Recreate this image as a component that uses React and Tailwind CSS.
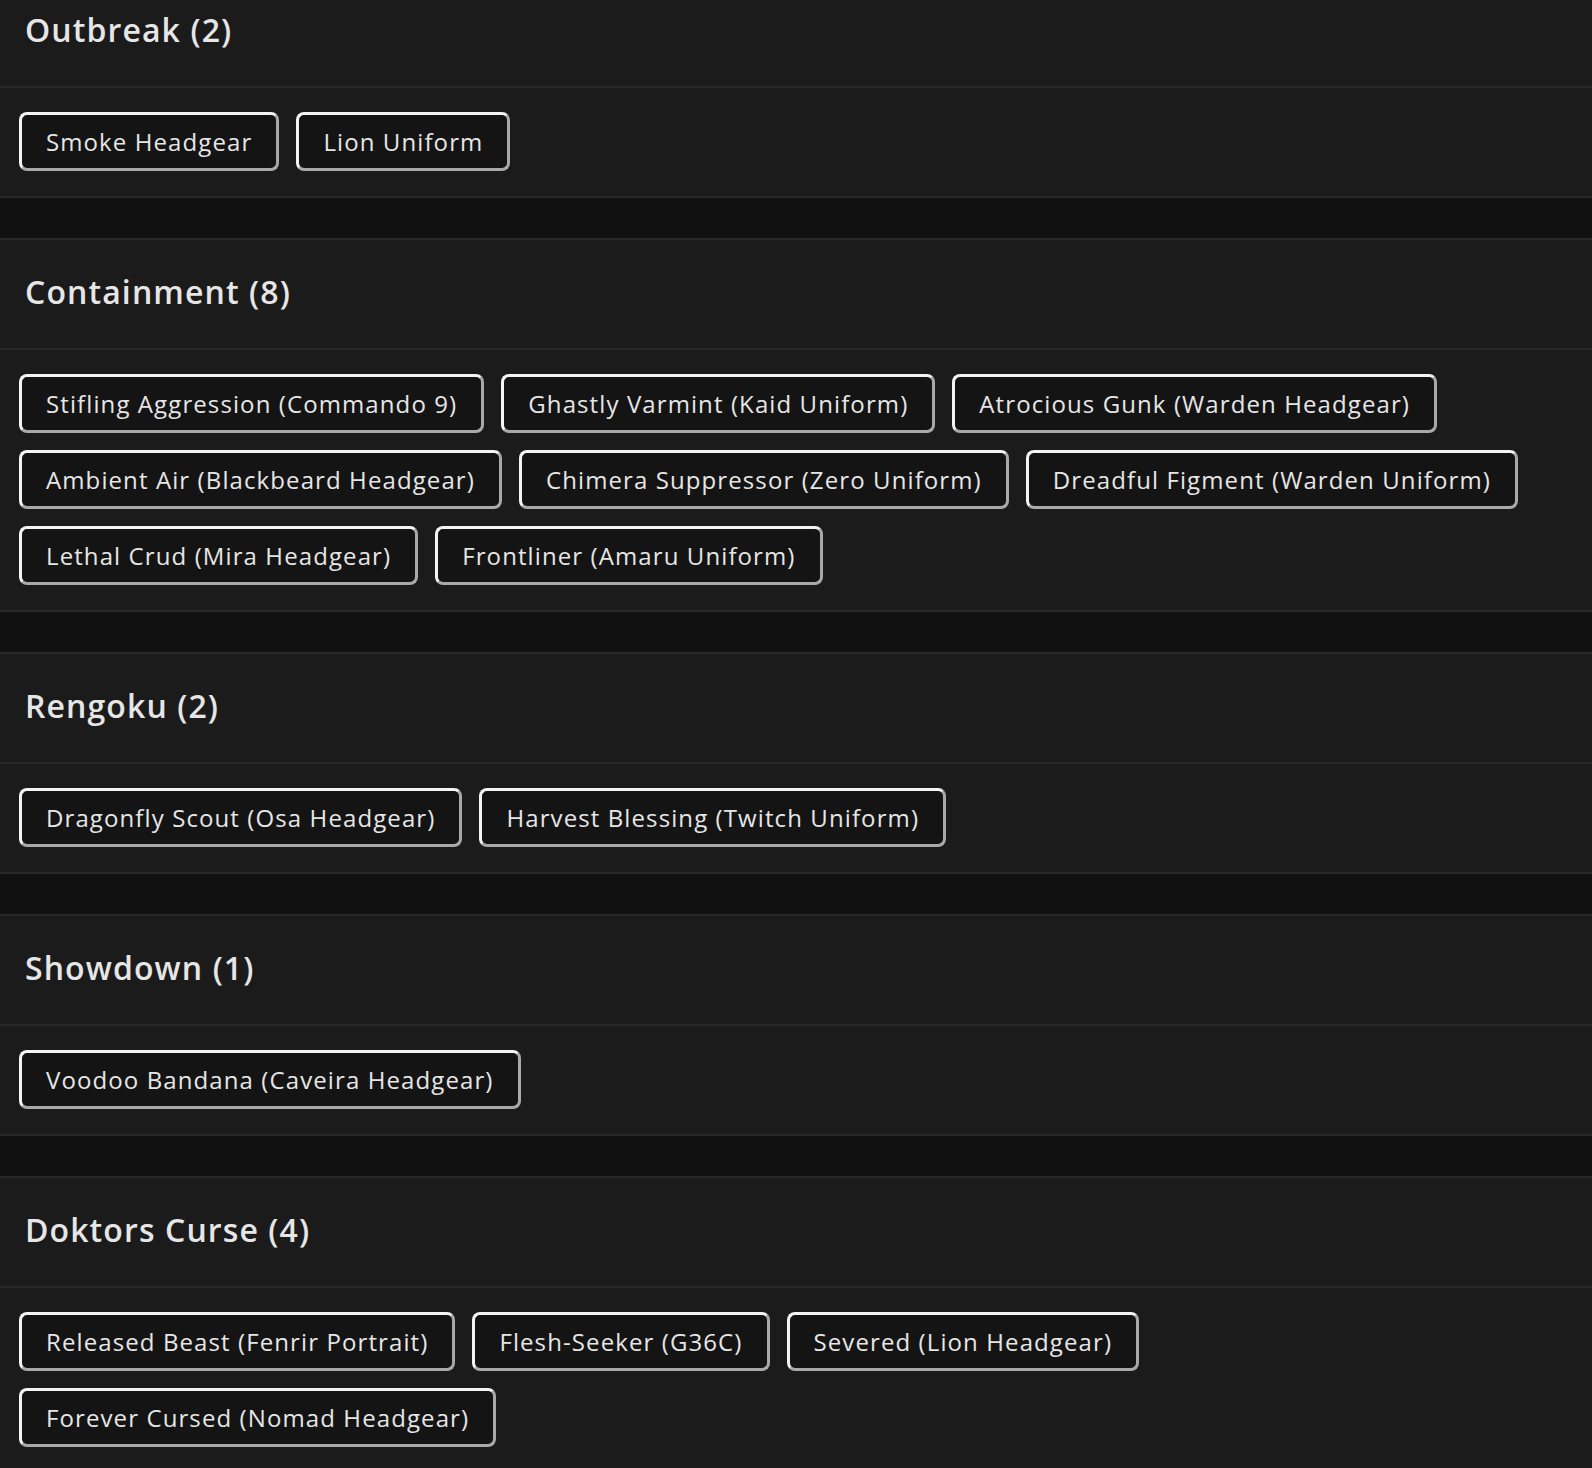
const sections = [
  { title: "Outbreak (2)", items: ["Smoke Headgear", "Lion Uniform"] },
  {
    title: "Containment (8)",
    items: [
      "Stifling Aggression (Commando 9)",
      "Ghastly Varmint (Kaid Uniform)",
      "Atrocious Gunk (Warden Headgear)",
      "Ambient Air (Blackbeard Headgear)",
      "Chimera Suppressor (Zero Uniform)",
      "Dreadful Figment (Warden Uniform)",
      "Lethal Crud (Mira Headgear)",
      "Frontliner (Amaru Uniform)",
    ],
  },
  {
    title: "Rengoku (2)",
    items: ["Dragonfly Scout (Osa Headgear)", "Harvest Blessing (Twitch Uniform)"],
  },
  { title: "Showdown (1)", items: ["Voodoo Bandana (Caveira Headgear)"] },
  {
    title: "Doktors Curse (4)",
    items: [
      "Released Beast (Fenrir Portrait)",
      "Flesh-Seeker (G36C)",
      "Severed (Lion Headgear)",
      "Forever Cursed (Nomad Headgear)",
    ],
  },
];

function Section({ title, items }) {
  return (
    <section className="bg-[#1b1b1b] border-y-2 border-[#282828]">
      <div className="h-[110px] flex items-center px-[25px] pb-[4px] border-b-2 border-[#282828]">
        <h2 className="text-[32px] font-semibold text-[#e6e6e6] tracking-[1.1px]">{title}</h2>
      </div>
      <div className="flex flex-wrap gap-[17px] px-[19px] pt-[24px] pb-[25px]">
        {items.map((item) => (
          <button
            key={item}
            className="h-[59px] px-[24px] rounded-[8px] bg-[#141414] text-[24px] text-[#e6e6e6] tracking-[1.1px] border-[3px] border-t-[#f4f4f4] border-l-[#f4f4f4] border-r-[#a9a9a9] border-b-[#a9a9a9]"
          >
            {item}
          </button>
        ))}
      </div>
    </section>
  );
}

export default function App() {
  return (
    <div className="h-[1468px] overflow-hidden bg-[#111111]" style={{ fontFamily: '"Open Sans", "Noto Sans", sans-serif' }}>
      <div className="-mt-[24px] flex flex-col gap-[40px]">
        {sections.map((s) => (
          <Section key={s.title} title={s.title} items={s.items} />
        ))}
      </div>
    </div>
  );
}
